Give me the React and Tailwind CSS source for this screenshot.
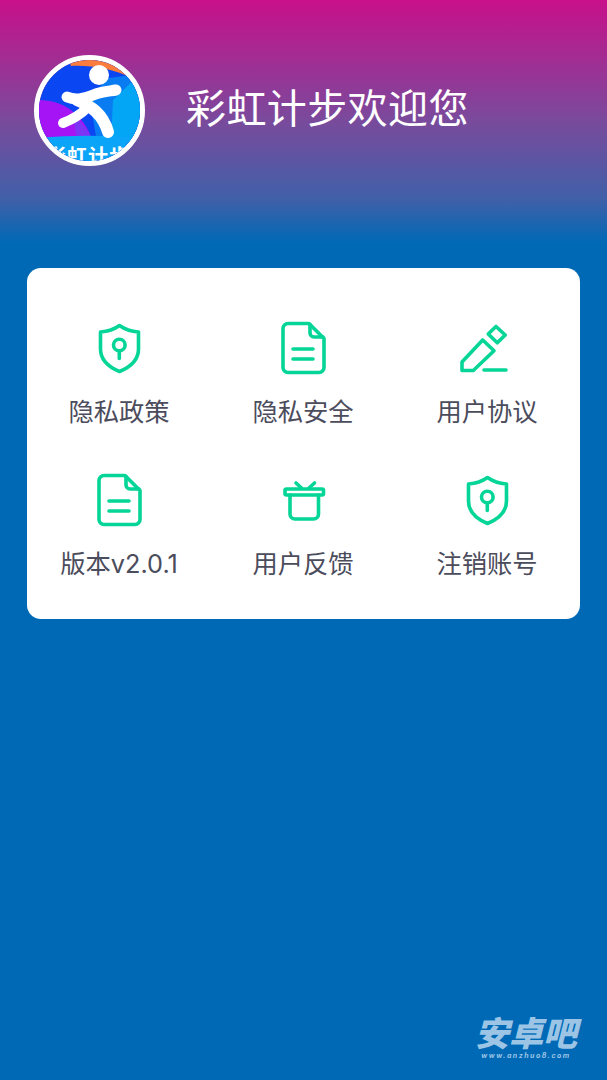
const green = "#05d596";

function ShieldIcon() {
  return (
    <svg width="60" height="60" viewBox="0 0 60 60" fill="none" stroke={green} strokeWidth="3.6" strokeLinecap="round" strokeLinejoin="round">
      <path d="M30.5 7.5C25 11.5 18 13.5 11.5 14V31C11.5 43 22 50 30.5 53.5C39 50 49.5 43 49.5 31V14C43 13.5 36 11.5 30.5 7.5Z" />
      <circle cx="30.3" cy="27" r="5.8" />
      <path d="M30.3 33V40.5" />
    </svg>
  );
}

function DocIcon() {
  return (
    <svg width="60" height="60" viewBox="0 0 60 60" fill="none" stroke={green} strokeWidth="3.6" strokeLinecap="round" strokeLinejoin="round">
      <path d="M15 5.5H36L51 20.5V49.5A5 5 0 0 1 46 54.5H15A5 5 0 0 1 10 49.5V10.5A5 5 0 0 1 15 5.5Z" />
      <path d="M37 6.5V15A4 4 0 0 0 41 19H50" />
      <path d="M20 31H40M20 41H40" />
    </svg>
  );
}

function PenIcon() {
  return (
    <svg width="60" height="60" viewBox="0 0 60 60" fill="none" stroke={green} strokeWidth="3.6" strokeLinecap="round" strokeLinejoin="round">
      <path d="M5 44L25.7 22L37 32.7L16.3 52.5H5Z" />
      <path d="M39 8.5L48.2 17L40.3 24.8L31.2 16Z" />
      <path d="M27 52H49" />
    </svg>
  );
}

function GiftIcon() {
  return (
    <svg width="60" height="60" viewBox="0 0 60 60" fill="none" stroke={green} strokeWidth="3.6" strokeLinecap="round" strokeLinejoin="round">
      <rect x="12" y="19" width="38.5" height="6" rx="1.5" />
      <path d="M17 25V44A5 5 0 0 0 22 49H40.5A5 5 0 0 0 45.5 44V25" />
      <path d="M23 13L28.5 18M41.5 13L36 18" />
    </svg>
  );
}

function Logo() {
  return (
    <div className="w-[111px] h-[111px] rounded-full border-[5px] border-white overflow-hidden shrink-0">
      <svg width="101" height="101" viewBox="0 0 101 101">
        <rect width="101" height="101" fill="#0a46f2" />
        <path d="M101 14V82H58L50 36L70 18Z" fill="#0a7cf2" />
        <path d="M101 14V82H72L74 40Z" fill="#02a6f4" />
        <path d="M30 0H92V18C75 9 52 5 32 6Z" fill="#fb7d3d" />
        <path d="M0 40C25 40 45 55 53 80H0Z" fill="#a414f5" />
        <path d="M34 56C42 62 50 70 53 80H38Z" fill="#7d35f5" />
        <path d="M0 78C30 75 70 75 101 78V101H0Z" fill="#0aa4f8" />
        <circle cx="60" cy="15" r="10" fill="#fff" />
        <path d="M28 37C40 42 50 36 60 33C67 31 72 31 77 30" fill="none" stroke="#fff" strokeWidth="11" strokeLinecap="round" />
        <path d="M38 40C52 46 64 54 69 72" fill="none" stroke="#fff" strokeWidth="12" strokeLinecap="round" />
        <path d="M48 48C40 56 32 60 24 63" fill="none" stroke="#fff" strokeWidth="10" strokeLinecap="round" />
        <text x="49" y="104" textAnchor="middle" fill="#fff" fontSize="20" letterSpacing="1" fontWeight="700" fontFamily="'Noto Sans CJK SC', sans-serif">彩虹计步</text>
      </svg>
    </div>
  );
}

const items = [
  { label: "隐私政策", Icon: ShieldIcon },
  { label: "隐私安全", Icon: DocIcon },
  { label: "用户协议", Icon: PenIcon },
  { label: "版本v2.0.1", Icon: DocIcon },
  { label: "用户反馈", Icon: GiftIcon },
  { label: "注销账号", Icon: ShieldIcon },
];

export default function App() {
  return (
    <div
      className="relative w-[607px] h-[1080px] overflow-hidden bg-[linear-gradient(180deg,#c8108a_0,#7a4a9c_120px,#3f60a8_200px,#0069b6_243px)]"
      style={{ fontFamily: "Inter, 'Noto Sans CJK SC', 'Noto Sans', sans-serif" }}
    >
      <header className="flex items-center h-[268px] pl-[34px] pb-[47px]">
        <Logo />
        <h1 className="ml-[41px] mb-[4px] text-[40px] leading-none tracking-[0.4px] text-white">彩虹计步欢迎您</h1>
      </header>

      <main className="mx-[27px] h-[351px] rounded-[14px] bg-white pt-[50px] grid grid-cols-[184px_184px_184px] auto-rows-[152px]">
        {items.map(({ label, Icon }) => (
          <div key={label} className="flex flex-col items-center">
            <Icon />
            <span className="mt-[16px] text-[25.3px] leading-[36px] text-[#4b4c5c] whitespace-nowrap">{label}</span>
          </div>
        ))}
      </main>

      <div className="absolute left-[473px] top-[1016px] w-[106px] text-center text-[#9cc4e4]">
        <div className="text-[34px] leading-[36px] font-black italic">安卓吧</div>
        <div className="text-[7px] leading-[8px] font-bold italic tracking-[1.5px]">www.anzhuo8.com</div>
      </div>
    </div>
  );
}
